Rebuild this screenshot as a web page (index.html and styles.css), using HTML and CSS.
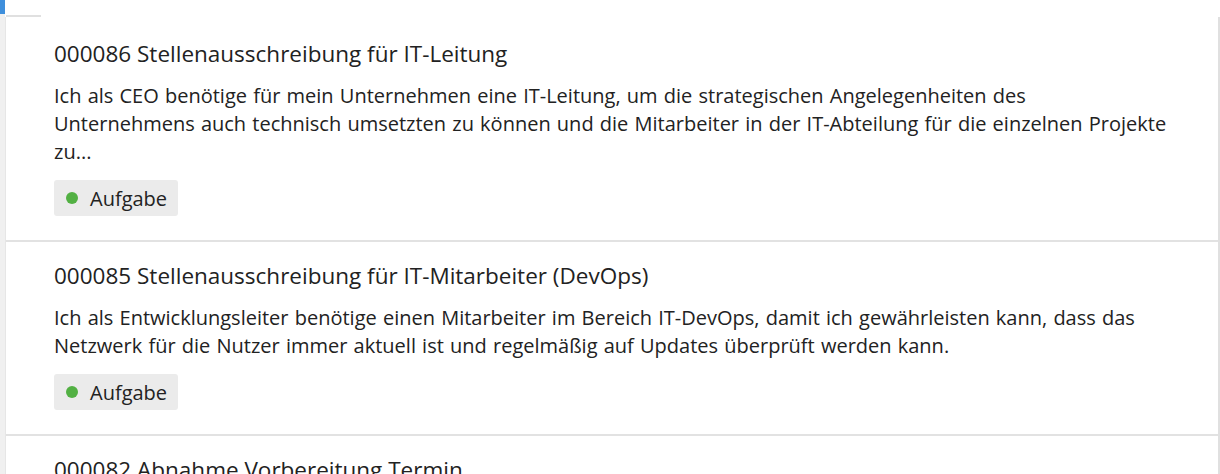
FILE: index.html
```html
<!DOCTYPE html>
<html lang="de">
<head>
    <meta charset="UTF-8">
    <title>Aufgaben</title>
    <link rel="stylesheet" href="styles.css">
</head>
<body>
    <div class="layout">
        <div class="sidebar">
            <div class="sidebar-active"></div>
        </div>
        <div class="main">
            <div class="list-head"></div>
            <ul class="ticket-list">
                <li class="ticket">
                    <h3 class="ticket-title">000086 Stellenausschreibung für IT-Leitung</h3>
                    <p class="ticket-text">Ich als CEO benötige für mein Unternehmen eine IT-Leitung, um die strategischen Angelegenheiten des Unternehmens auch technisch umsetzten zu können und die Mitarbeiter in der IT-Abteilung für die einzelnen Projekte zu...</p>
                    <span class="tag"><span class="tag-dot"></span>Aufgabe</span>
                </li>
                <li class="ticket">
                    <h3 class="ticket-title">000085 Stellenausschreibung für IT-Mitarbeiter (DevOps)</h3>
                    <p class="ticket-text">Ich als Entwicklungsleiter benötige einen Mitarbeiter im Bereich IT-DevOps, damit ich gewährleisten kann, dass das Netzwerk für die Nutzer immer aktuell ist und regelmäßig auf Updates überprüft werden kann.</p>
                    <span class="tag"><span class="tag-dot"></span>Aufgabe</span>
                </li>
                <li class="ticket">
                    <h3 class="ticket-title">000082 Abnahme Vorbereitung Termin</h3>
                    <p class="ticket-text">Vorbereitung des Abnahmetermins mit dem Kunden.</p>
                    <span class="tag"><span class="tag-dot"></span>Aufgabe</span>
                </li>
            </ul>
        </div>
    </div>
</body>
</html>
```
FILE: styles.css
```css
body {
    margin: 0;
    font-family: "Open Sans", "Noto Sans", sans-serif;
    color: #222;
    background: #fff;
    overflow: hidden;
}
.layout {
    display: flex;
    height: 474px;
    overflow: hidden;
}
.sidebar {
    width: 5px;
    flex-shrink: 0;
    background: #f0f0f0;
}
.sidebar-active {
    height: 14px;
    background: #3f8fdc;
}
.main {
    flex: 1;
    min-width: 0;
}
.list-head {
    width: 35px;
    height: 15px;
    margin-left: 1px;
    border-bottom: 2px solid #e0e0e0;
}
.ticket-list {
    list-style: none;
    margin: 0;
    padding: 0;
    border-left: 1px solid #e6e6e6;
    border-right: 2px solid #e0e0e0;
}
.ticket {
    padding: 20px 49px 24px 48px;
    border-bottom: 2px solid #e2e2e2;
}
.ticket:first-child {
    padding-top: 23px;
}
.ticket-title {
    margin: 0;
    font-size: 22.5px;
    font-weight: 400;
    line-height: 28px;
}
.ticket-text {
    margin: 14px 0 0;
    font-size: 20px;
    line-height: 28px;
    word-spacing: 1px;
}
.tag {
    display: inline-flex;
    align-items: center;
    gap: 12px;
    height: 36px;
    margin-top: 14px;
    padding: 0 11px 0 12px;
    border-radius: 3px;
    background: #ebebeb;
    font-size: 20px;
}
.tag-dot {
    width: 12px;
    height: 12px;
    border-radius: 50%;
    background: #52b043;
}
```
